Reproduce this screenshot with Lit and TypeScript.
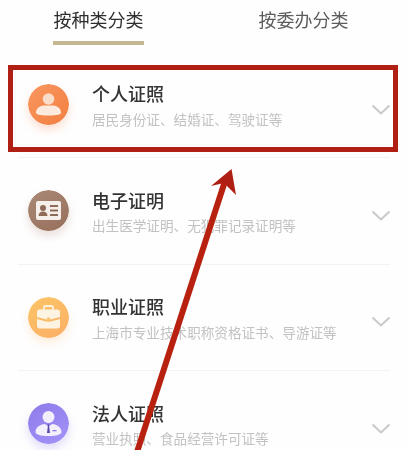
import { LitElement, html, css, svg } from "lit";
import { customElement } from "lit/decorators.js";

const iconPerson = svg`
  <defs><linearGradient id="g1" x1="0" y1="0" x2="1" y2="1"><stop offset="0" stop-color="#f8975f"/><stop offset="1" stop-color="#f37f42"/></linearGradient></defs>
  <circle cx="20.5" cy="20.5" r="20.5" fill="url(#g1)"/>
  <circle cx="20.5" cy="15" r="5.8" fill="#fbdcc9"/>
  <path d="M8 28.500c0-4.500 5-7 8-7h9c3 0 8 2.500 8 7 0 2-3 3-12.500 3S8 30.500 8 28.500z" fill="#fdeadf"/>`;
const iconCard = svg`
  <defs><linearGradient id="g2" x1="0" y1="0" x2="0.6" y2="1"><stop offset="0" stop-color="#a98977"/><stop offset="1" stop-color="#9a735f"/></linearGradient></defs>
  <circle cx="20.5" cy="20.500" r="20.500" fill="url(#g2)"/>
  <rect x="8" y="11" width="25" height="19" rx="2" fill="#f6eeea"/>
  <circle cx="15" cy="18" r="3" fill="#8f6a57"/>
  <path d="M10.500 26c0-3 2-4.500 4.500-4.500s4.500 1.500 4.500 4.500z" fill="#8f6a57"/>
  <path d="M22 16h8M22 20.500h8M22 25h8" stroke="#8f6a57" stroke-width="1.800"/>`;
const iconCase = svg`
  <defs><linearGradient id="g3" x1="0" y1="0" x2="0.5" y2="1"><stop offset="0" stop-color="#fbc566"/><stop offset="1" stop-color="#fcb266"/></linearGradient></defs>
  <circle cx="20.500" cy="20.500" r="20.500" fill="url(#g3)"/>
  <path d="M16 13v-2.500c0-1 .7-1.500 1.500-1.500h6c.8 0 1.500.5 1.500 1.500V13" fill="none" stroke="#fdf0dc" stroke-width="1.800"/>
  <path d="M9 15c0-1.500 1-2.500 2.500-2.500h18c1.500 0 2.500 1 2.500 2.500v5l-9.500 2.500h-4L9 20z" fill="#fdf3e2"/>
  <path d="M9 22l9 2.500h5l9-2.500v7c0 1.500-1 2.500-2.500 2.500h-18C10 31.500 9 30.500 9 29z" fill="#fdf3e2"/>
  <rect x="19" y="20.500" width="3" height="4" rx="1" fill="#f8c26e"/>`;
const iconLegal = svg`
  <defs><linearGradient id="g4" x1="0" y1="0" x2="0.6" y2="1"><stop offset="0" stop-color="#8f7bea"/><stop offset="1" stop-color="#a08ff5"/></linearGradient></defs>
  <circle cx="20.500" cy="20.500" r="20.500" fill="url(#g4)"/>
  <circle cx="20.500" cy="14" r="6" fill="#f3effd"/>
  <path d="M7.500 29c0-5 5-7.500 9-8l4 2 4-2c4 .5 9 3 9 8 0 2.500-5 4-13 4s-13-1.500-13-4z" fill="#f3effd"/>
  <path d="M19.500 21.500h2l-.3 2.500.8 6h-3l.8-6z" fill="#5a49a8"/>
  <rect x="24.500" y="27" width="4" height="1.300" fill="#8f7bea"/>`;

const rows = [
  { title: "个人证照", sub: "居民身份证、结婚证、驾驶证等", icon: iconPerson, shadow: "rgba(244,122,62,.22)" },
  { title: "电子证明", sub: "出生医学证明、无犯罪记录证明等", icon: iconCard, shadow: "rgba(148,107,87,.2)" },
  { title: "职业证照", sub: "上海市专业技术职称资格证书、导游证等", icon: iconCase, shadow: "rgba(252,178,102,.22)" },
  { title: "法人证照", sub: "营业执照、食品经营许可证等", icon: iconLegal, shadow: "rgba(143,123,234,.25)" },
];

@customElement("app-root")
export class AppRoot extends LitElement {
  static styles = css`
    :host {
      display: block;
      position: relative;
      width: 410px;
      height: 450px;
      overflow: hidden;
      background: #fefefe;
      font-family: "Noto Sans CJK SC", "Noto Sans", sans-serif;
      filter: blur(0.3px);
    }
    .tabs {
      height: 46px;
      display: flex;
      justify-content: space-between;
      padding: 0 61px 0 53px;
    }
    .tab {
      width: 91px;
      height: 45px;
      display: flex;
      justify-content: center;
      padding-top: 6px;
      box-sizing: border-box;
      font-size: 18px;
      line-height: 26px;
      color: #5c5c5c;
      white-space: nowrap;
    }
    .tab.active {
      color: #2e2e2e;
      border-bottom: 4px solid #c6b793;
    }
    .list {
      padding: 6px 20px 0 18px;
    }
    .row {
      height: 106.500px;
      box-sizing: border-box;
      display: flex;
      align-items: center;
      border-bottom: 1px solid #f3f3f3;
      padding: 0 0 0 10px;
    }
    .row:first-child { height: 106px; }
    .badge {
      width: 41px;
      height: 41px;
      flex: none;
      border-radius: 50%;
      display: block;
    }
    .text {
      flex: 1;
      margin-left: 23px;
      min-width: 0;
    }
    .title {
      font-size: 18px;
      line-height: 26px;
      font-weight: 500;
      color: #333;
      white-space: nowrap;
    }
    .sub {
      margin-top: 2.500px;
      font-size: 13.600px;
      line-height: 20px;
      color: #c2c2c2;
      white-space: nowrap;
    }
    .chev {
      width: 20px;
      height: 12px;
      flex: none;
      margin-right: -1px;
      margin-top: 10px;
    }
    .overlay {
      position: absolute;
      left: 0;
      top: 0;
      width: 410px;
      height: 450px;
      pointer-events: none;
    }
  `;

  render() {
    return html`
      <div class="tabs">
        <div class="tab active">按种类分类</div>
        <div class="tab">按委办分类</div>
      </div>
      <div class="list">
        ${rows.map(
          (r) => html`
            <div class="row">
              <svg class="badge" viewBox="0 0 41 41" style="box-shadow:0 5px 9px ${r.shadow}">${r.icon}</svg>
              <div class="text">
                <div class="title">${r.title}</div>
                <div class="sub">${r.sub}</div>
              </div>
              <svg class="chev" viewBox="0 0 20 12"><path d="M1.500 1.500L10 9.500L18.500 1.500" fill="none" stroke="#c9c9c9" stroke-width="2"/></svg>
            </div>
          `
        )}
      </div>
      <svg class="overlay" viewBox="0 0 410 450">
        <rect x="10.500" y="67.500" width="385" height="82" fill="none" stroke="#b01f14" stroke-width="5"/>
        <path d="M137 452L226 178" stroke="#b8200f" stroke-width="6" fill="none"/>
        <path d="M231.500 169L211 186L224 183L236 195z" fill="#b01f14"/>
      </svg>
    `;
  }
}
